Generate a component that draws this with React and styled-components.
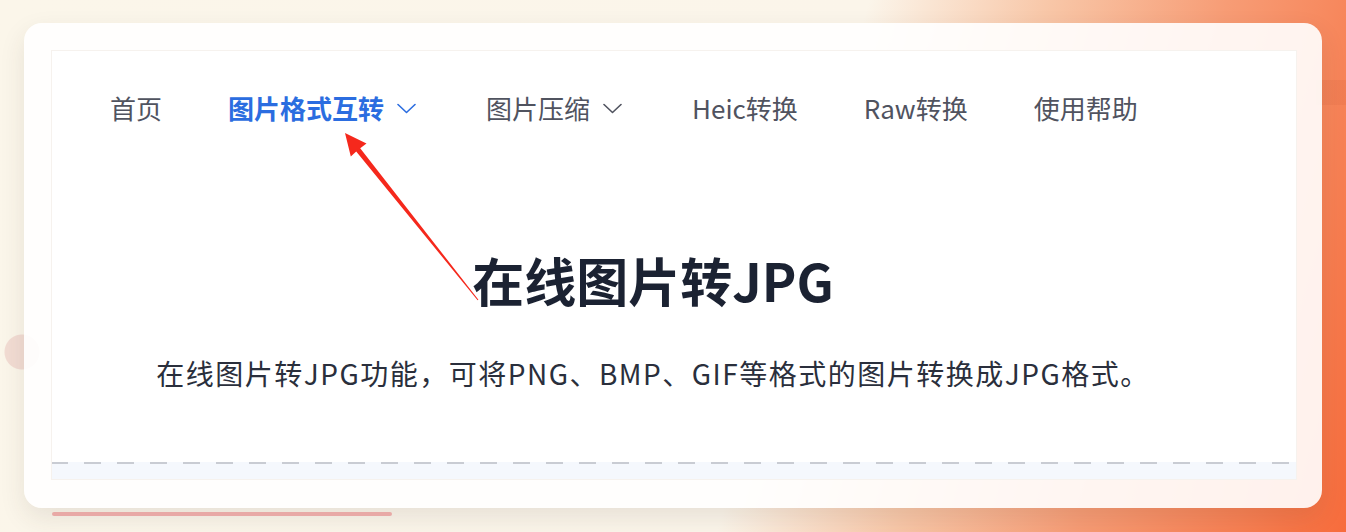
import React from 'react';
import styled, { createGlobalStyle } from 'styled-components';

const GlobalStyle = createGlobalStyle`
  html, body {
    margin: 0;
    padding: 0;
  }
  body {
    font-family: "Noto Sans CJK SC", "Noto Sans", sans-serif;
    background: #fbf6ea;
  }
`;

const Page = styled.div`
  position: relative;
  width: 1346px;
  height: 532px;
  overflow: hidden;
  box-sizing: border-box;
  padding: 23px 24px 0 24px;
  background:
    radial-gradient(circle at 22px 352px, #f2dcd3 17px, transparent 18px),
    linear-gradient(to bottom, transparent 80px, rgba(190, 70, 40, 0.10) 80px, rgba(190, 70, 40, 0.10) 105px, transparent 105px) right top / 30px 100% no-repeat,
    linear-gradient(106deg, #fbf6ea 0%, #fbf5ea 58%, #f8c7a8 70%, #f79c75 82%, #f76c3c 100%);
`;

const Card = styled.div`
  width: 1298px;
  height: 485px;
  box-sizing: border-box;
  padding: 27px 25px 28px 27px;
  border-radius: 18px;
  background: rgba(255, 255, 255, 0.9);
  box-shadow: 0 10px 26px rgba(60, 50, 40, 0.10);
`;

const Panel = styled.div`
  height: 100%;
  box-sizing: border-box;
  background: #ffffff;
  border: 1px solid #f6f2ee;
  display: flex;
  flex-direction: column;
`;

const Nav = styled.nav`
  display: flex;
  align-items: center;
  gap: 66px;
  padding-left: 58px;
  margin-top: 39px;
  height: 36px;
`;

const NavItem = styled.a`
  display: flex;
  align-items: center;
  gap: 13px;
  margin-right: ${(p) => (p.$menu ? '4px' : '0')};
  font-size: 26px;
  line-height: 36px;
  text-decoration: none;
  color: ${(p) => (p.$active ? '#2b6de0' : '#50535f')};
  font-weight: ${(p) => (p.$active ? 700 : 400)};
  white-space: nowrap;
`;

const Chevron = ({ color }) => (
  <svg width="19" height="11" viewBox="0 0 19 11" fill="none">
    <polyline points="1,1.5 9.5,9.5 18,1.5" stroke={color} strokeWidth="1.6" strokeLinecap="round" strokeLinejoin="round" />
  </svg>
);

const Hero = styled.section`
  display: flex;
  flex-direction: column;
  align-items: center;
  padding-right: 42px;
  margin-top: 124px;
`;

const Title = styled.h1`
  margin: 0;
  font-size: 52px;
  line-height: 60px;
  font-weight: 700;
  color: #1b2232;
`;

const Subtitle = styled.p`
  margin: 43px 0 0 0;
  font-size: 28px;
  line-height: 40px;
  letter-spacing: 1.5px;
  color: #2a2f3c;
`;

const DropZone = styled.div`
  margin-top: auto;
  height: 17px;
  background-color: #f5f8fd;
  background-image: linear-gradient(to right, #c9ccd3 0, #c9ccd3 17px, transparent 17px);
  background-size: 33px 2px;
  background-repeat: repeat-x;
  background-position: -1px 0;
`;

const UnderBar = styled.div`
  width: 340px;
  height: 4px;
  margin: 4px 0 0 28px;
  border-radius: 2px;
  background: #e8a9a6;
`;

const ArrowLayer = styled.svg`
  position: absolute;
  left: 0;
  top: 0;
  pointer-events: none;
`;

const navItems = [
  { label: '首页' },
  { label: '图片格式互转', active: true, menu: true },
  { label: '图片压缩', menu: true },
  { label: 'Heic转换' },
  { label: 'Raw转换' },
  { label: '使用帮助' },
];

export default function App() {
  return (
    <>
      <GlobalStyle />
      <Page>
        <Card>
          <Panel>
            <Nav>
              {navItems.map((item) => (
                <NavItem key={item.label} href="#" $active={item.active} $menu={item.menu}>
                  {item.label}
                  {item.menu && <Chevron color={item.active ? '#2b6de0' : '#50535f'} />}
                </NavItem>
              ))}
            </Nav>
            <Hero>
              <Title>在线图片转JPG</Title>
              <Subtitle>在线图片转JPG功能，可将PNG、BMP、GIF等格式的图片转换成JPG格式。</Subtitle>
            </Hero>
            <DropZone />
          </Panel>
        </Card>
        <UnderBar />
        <ArrowLayer width="1346" height="532" viewBox="0 0 1346 532">
          <polygon
            fill="#f5281c"
            points="478.4,299.7 360.2,148.2 366.5,143.6 345,133 350.8,156.6 356.2,151.4 477.6,300.3"
          />
        </ArrowLayer>
      </Page>
    </>
  );
}
